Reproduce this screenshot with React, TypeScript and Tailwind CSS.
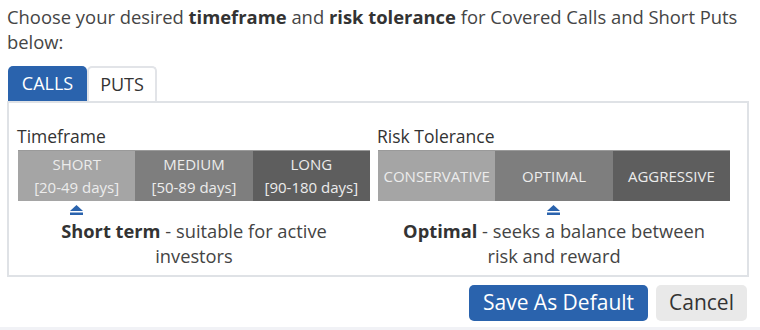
import React from "react";

const font = { fontFamily: '"Open Sans", "Noto Sans", sans-serif' };

type Seg = { label: string; sub?: string; bg: string };

function Marker() {
  return (
    <svg width="13" height="10" viewBox="0 0 13 10" className="block">
      <path d="M6.5 0 L13 6 L0 6 Z" fill="#2a63ad" />
      <rect x="0" y="7.5" width="13" height="2.5" fill="#2a63ad" />
    </svg>
  );
}

function Selector({
  title,
  segs,
  active,
  lead,
  rest,
}: {
  title: string;
  segs: Seg[];
  active: number;
  lead: string;
  rest: string;
}) {
  return (
    <div className="flex flex-col">
      <div className="text-[17.5px] leading-[22px] text-[#333]">{title}</div>
      <div className="mt-[3px] mx-px flex h-[51px] border-t border-[#9a9a9a]">
        {segs.map((s) => (
          <div
            key={s.label}
            className={`flex-1 flex flex-col items-center justify-center text-[15px] leading-[23px] text-[#ececec] ${s.bg}`}
          >
            <span>{s.label}</span>
            {s.sub && <span>{s.sub}</span>}
          </div>
        ))}
      </div>
      <div className="mx-px flex h-[14px] items-end">
        {segs.map((s, i) => (
          <div key={s.label} className="flex-1 flex justify-center">
            {i === active && <Marker />}
          </div>
        ))}
      </div>
      <p className="mt-[3px] px-[12px] text-center text-[18.3px] leading-[25px] text-[#444]">
        <b className="font-bold text-[#333]">{lead}</b> - {rest}
      </p>
    </div>
  );
}

export default function App() {
  return (
    <div className="w-[760px] h-[330px] bg-white overflow-hidden" style={font}>
      <div className="pl-[7px] pr-[11px] pt-[4px]">
        <p className="text-[18.4px] leading-[25px] text-[#454545]">
          Choose your desired <b className="font-bold text-[#333]">timeframe</b> and{" "}
          <b className="font-bold text-[#333]">risk tolerance</b> for Covered Calls and Short Puts below:
        </p>

        <div className="mt-[12px] flex pl-px">
          <div className="w-[79px] h-[35px] flex items-center justify-center rounded-t-[5px] bg-[#2a63ad] text-[18px] text-white">
            CALLS
          </div>
          <div className="w-[70px] h-[35px] flex items-center justify-center rounded-t-[5px] border-2 border-b-0 border-[#e2e4e8] bg-white text-[18px] text-[#333]">
            PUTS
          </div>
        </div>

        <div className="border-2 border-[#dfe2e6] h-[176px] pl-[8px] pr-[16px] pt-[22px] grid grid-cols-2 gap-[6px]">
          <Selector
            title="Timeframe"
            segs={[
              { label: "SHORT", sub: "[20-49 days]", bg: "bg-[#a5a5a5]" },
              { label: "MEDIUM", sub: "[50-89 days]", bg: "bg-[#7e7e7e]" },
              { label: "LONG", sub: "[90-180 days]", bg: "bg-[#5e5e5e]" },
            ]}
            active={0}
            lead="Short term"
            rest="suitable for active investors"
          />
          <Selector
            title="Risk Tolerance"
            segs={[
              { label: "CONSERVATIVE", bg: "bg-[#a5a5a5]" },
              { label: "OPTIMAL", bg: "bg-[#7e7e7e]" },
              { label: "AGGRESSIVE", bg: "bg-[#5e5e5e]" },
            ]}
            active={1}
            lead="Optimal"
            rest="seeks a balance between risk and reward"
          />
        </div>

        <div className="mt-[8px] flex justify-end gap-[8px] pr-[2px]">
          <button className="h-[36px] w-[179px] rounded-[5px] bg-[#2a63ad] text-[21px] text-white">
            Save As Default
          </button>
          <button className="h-[36px] w-[91px] rounded-[5px] bg-[#e9e9e9] text-[21px] text-[#333]">
            Cancel
          </button>
        </div>
      </div>
      <div className="mt-[6px] h-[4px] bg-[#f1f2f6]" />
    </div>
  );
}
